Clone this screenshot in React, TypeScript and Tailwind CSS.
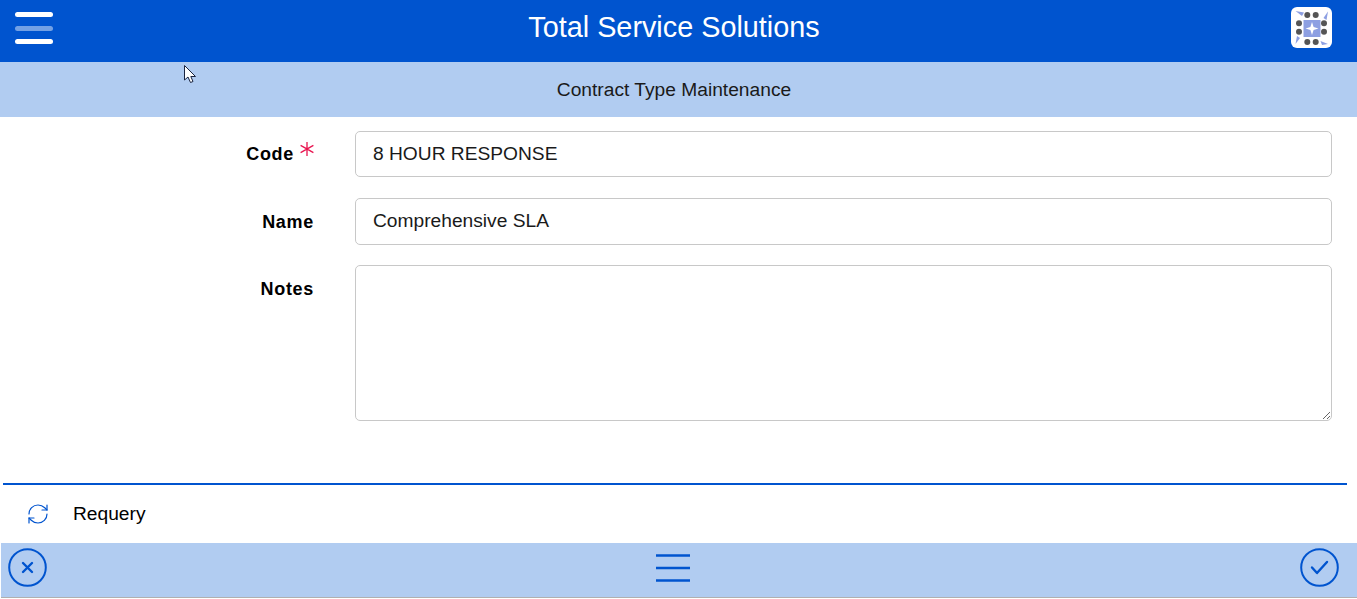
import React from 'react';
import { RefreshCw } from 'lucide-react';

const ink = '#0054cf';

function Logo() {
  return (
    <div className="w-[41px] h-[41px] bg-white rounded-md mt-[7px]">
      <svg width="41" height="41" viewBox="0 0 41 41">
        <rect x="12.5" y="13" width="17" height="17" fill="#8d9fe2" />
        <path d="M21 15 L22.6 20 L27.5 21.5 L22.6 23 L21 28 L19.4 23 L14.5 21.5 L19.4 20 Z" fill="#fff" />
        <g fill="#555">
          <circle cx="16.3" cy="8" r="3" />
          <circle cx="24.7" cy="8" r="3" />
          <circle cx="16.3" cy="35" r="3" />
          <circle cx="24.7" cy="35" r="3" />
          <circle cx="8" cy="16.3" r="3" />
          <circle cx="8" cy="24.7" r="3" />
          <circle cx="33" cy="16.3" r="3" />
          <circle cx="33" cy="24.7" r="3" />
        </g>
        <g fill="#8d9fe2">
          <path d="M4.5 4 L13 5.5 L11 9 Z" />
          <path d="M37 4.5 L35.5 13 L32.5 11 Z" />
          <path d="M4.5 37 L6 29 L9 31 Z" />
          <path d="M29.5 34 L37 37 L31 38 Z" />
        </g>
      </svg>
    </div>
  );
}

function Field({ label, required, children, className }: { label: string; required?: boolean; children: React.ReactNode; className?: string }) {
  return (
    <div className={`flex ${className ?? ''}`}>
      <div className={`w-[355px] shrink-0 flex justify-end ${required ? 'pr-[61px] pt-[12px]' : 'pr-[41px] pt-[13px]'}`}>
        <span className="relative h-[22px] text-[18px] font-bold tracking-[0.7px] text-black leading-[22px]">
          {label}
          {required && (
            <svg width="16" height="16" viewBox="0 0 16 16" fill="none" stroke="#e8144f" strokeWidth="1.3" className="absolute left-[calc(100%+5px)] top-[-2px]">
              <path d="M8 1 V15 M1.6 4.4 L14.4 11.6 M14.4 4.4 L1.6 11.6" />
            </svg>
          )}
        </span>
      </div>
      {children}
    </div>
  );
}

export default function App() {
  return (
    <div className="relative h-[599px] w-[1357px] overflow-hidden bg-white font-['Liberation_Sans',Arial,sans-serif]">
      {/* Header */}
      <div className="flex h-[62px] bg-[#0054cf]">
        <div className="w-[57px] pl-[15px] pt-[12px] flex flex-col gap-[8.5px]">
          <div className="w-[38px] h-[5px] rounded-full bg-white" />
          <div className="w-[38px] h-[5px] rounded-full bg-white/45" />
          <div className="w-[38px] h-[5px] rounded-full bg-white" />
        </div>
        <div className="flex-1 text-center text-white text-[28.8px] leading-[55px]">Total Service Solutions</div>
        <div className="pr-[25px]">
          <Logo />
        </div>
      </div>

      {/* Title */}
      <div className="h-[55px] bg-[#b1ccf1] pr-[9px] text-center text-[19.2px] leading-[55px] text-[#1a1a1a]">
        Contract Type Maintenance
      </div>

      {/* Form */}
      <div className="h-[366px] pt-[14px]">
        <Field label="Code" required>
          <input
            readOnly
            value="8 HOUR RESPONSE"
            className="w-[977px] h-[46px] rounded-[5px] border border-[#c8c8c8] px-[17px] text-[19.2px] text-[#1a1a1a] outline-none"
          />
        </Field>
        <Field label="Name" className="mt-[21px]">
          <input
            readOnly
            value="Comprehensive SLA"
            className="w-[977px] h-[47px] rounded-[5px] border border-[#c8c8c8] px-[17px] pb-[2px] text-[19.2px] text-[#1a1a1a] outline-none"
          />
        </Field>
        <Field label="Notes" className="mt-[20px]">
          <textarea
            readOnly
            className="block w-[977px] h-[156px] rounded-[5px] border border-[#c8c8c8] px-[17px] py-2 text-[19.2px] outline-none"
          />
        </Field>
      </div>

      {/* Actions */}
      <div className="ml-[3px] w-[1344px] h-[60px] border-t-2 border-[#0054cf] flex items-center">
        <RefreshCw size={24} strokeWidth={1.2} color={ink} className="ml-[23px]" />
        <span className="ml-[23px] text-[19.2px] text-black">Requery</span>
      </div>

      {/* Footer */}
      <div className="ml-[1px] h-[55px] bg-[#b1ccf1] border-b border-[#b0b0b0] flex items-center justify-between pl-[7px] pr-[18px] pb-[5px]">
        <svg width="39" height="39" viewBox="0 0 39 39" fill="none" stroke={ink} strokeLinecap="round">
          <circle cx="19.5" cy="19.5" r="18.3" strokeWidth="2" />
          <path d="M15 15 L24 24 M24 15 L15 24" strokeWidth="2.4" />
        </svg>
        <svg width="36" height="30" viewBox="0 0 36 30" fill="none" stroke={ink} strokeWidth="2.4" className="mr-[2px]">
          <path d="M1 2.5 H35 M1 15 H35 M1 27.5 H35" />
        </svg>
        <svg width="39" height="39" viewBox="0 0 39 39" fill="none" stroke={ink} strokeLinecap="round" strokeLinejoin="round">
          <circle cx="19.5" cy="19.5" r="18.3" strokeWidth="2" />
          <path d="M12 19.5 L17 25 L27 14" strokeWidth="2.4" />
        </svg>
      </div>

      {/* Mouse pointer from the capture */}
      <svg width="14" height="20" viewBox="0 0 14 20" className="absolute left-[184px] top-[65px]">
        <path d="M0.5 0.5 V15 L4 12 L6.5 17.5 L9 16.5 L6.8 11.5 L11.5 11.5 Z" fill="#fff" stroke="#1a2440" strokeWidth="1" />
      </svg>
    </div>
  );
}
